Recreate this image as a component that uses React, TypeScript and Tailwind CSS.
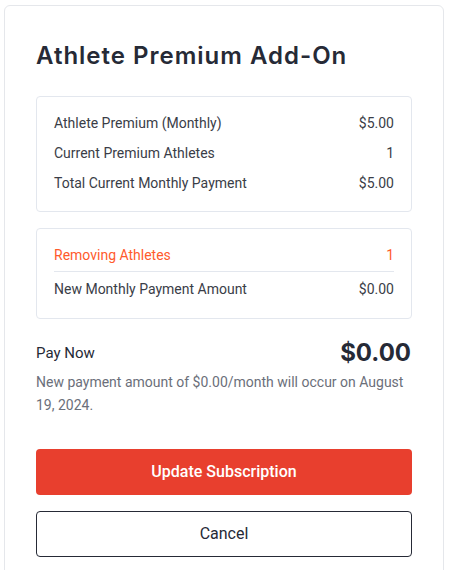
const rows = [
  { label: 'Athlete Premium (Monthly)', value: '$5.00' },
  { label: 'Current Premium Athletes', value: '1' },
  { label: 'Total Current Monthly Payment', value: '$5.00' },
];

export default function App() {
  return (
    <div className="bg-white min-h-[570px] pt-[5px] pl-[4px] font-['Roboto',sans-serif]">
      <div className="w-[440px] min-h-[600px] rounded-md border border-[#e5e7eb] px-[31px] pt-[34px]">
        <h1 className="font-['Inter',sans-serif] text-[24px] leading-[32px] font-semibold text-[#262a36] tracking-[1px]">
          Athlete Premium Add-On
        </h1>

        {/* Current plan */}
        <div className="mt-[24px] rounded border border-[#e3e7ee] px-[17px] pt-[11px] pb-[13px] flex flex-col">
          {rows.map((r) => (
            <div key={r.label} className="flex justify-between items-center h-[30px] text-[14px] text-[#3a3d47]">
              <span>{r.label}</span>
              <span>{r.value}</span>
            </div>
          ))}
        </div>

        {/* Changes */}
        <div className="mt-[16px] rounded border border-[#e3e7ee] px-[17px] pt-[11px] pb-[14px]">
          <div className="flex justify-between items-center h-[30px] text-[14px] text-[#ff5a2c]">
            <span>Removing Athletes</span>
            <span>1</span>
          </div>
          <div className="border-t border-[#e3e7ee] mt-[1px] mb-[2px]" />
          <div className="flex justify-between items-center h-[30px] text-[14px] text-[#3a3d47]">
            <span>New Monthly Payment Amount</span>
            <span>$0.00</span>
          </div>
        </div>

        {/* Pay now */}
        <div className="mt-[16px] flex justify-between items-center">
          <span className="text-[15px] text-[#262a36]">Pay Now</span>
          <span className="font-['Inter',sans-serif] text-[24px] font-bold text-[#262a36] mr-[1px]">$0.00</span>
        </div>
        <p className="text-[14px] leading-[23px] text-[#6b6f7a]">
          New payment amount of $0.00/month will occur on August 19, 2024.
        </p>

        <div className="mt-[32px] flex flex-col gap-[16px]">
          <button className="h-[46px] w-full rounded bg-[#e83f2e] text-white text-[16px] font-medium">
            Update Subscription
          </button>
          <button className="h-[46px] w-full rounded border border-[#262a36] bg-white text-[#262a36] text-[16px]">
            Cancel
          </button>
        </div>
      </div>
    </div>
  );
}
